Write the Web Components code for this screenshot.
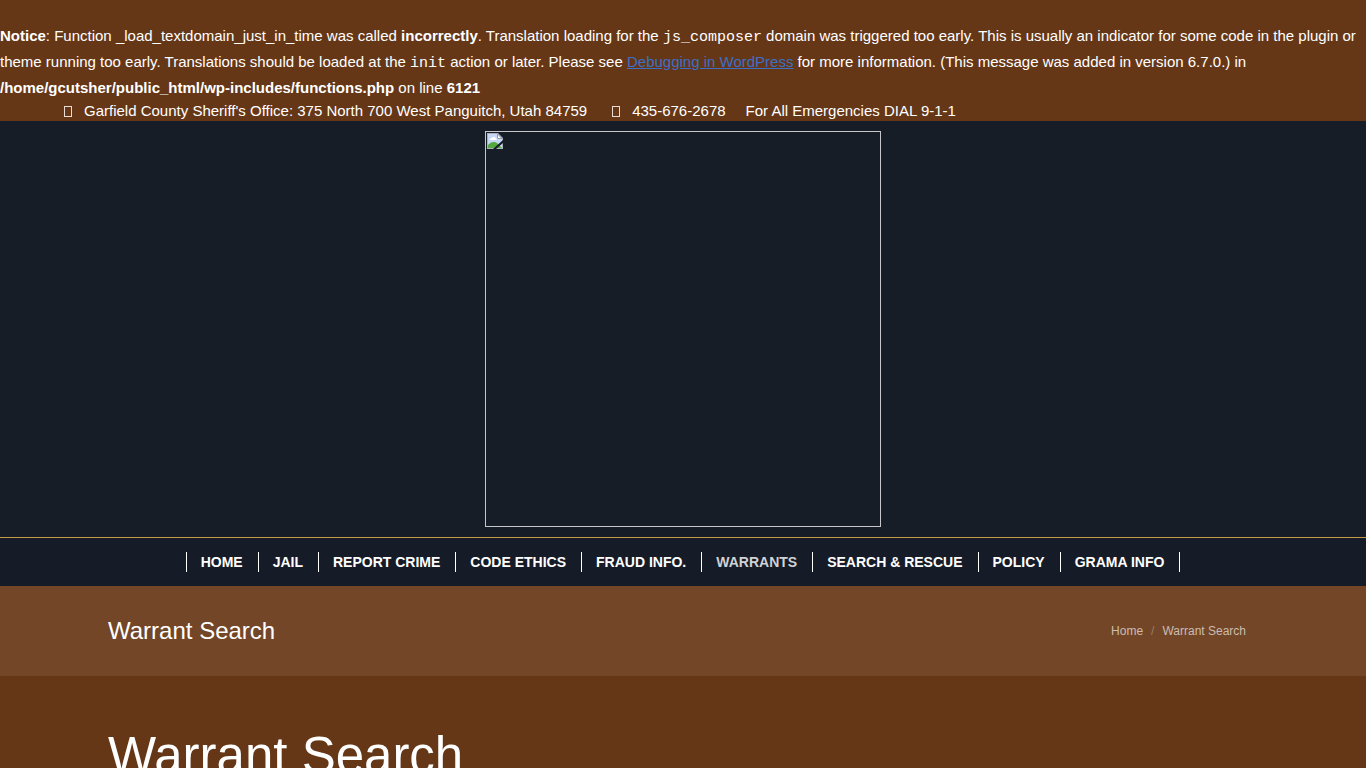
<!DOCTYPE html>
<html lang="en">
<head>
<meta charset="utf-8">
<meta name="viewport" content="width=device-width, initial-scale=1">
<title>Warrant Search</title>
<style>
  html { overflow-x: hidden; }
  body { margin: 0; background: #653717; color: #fff; font: 15px/26px "Liberation Sans", Arial, sans-serif; }
</style>
</head>
<body>
<sheriff-page></sheriff-page>

<template id="page-tpl">
  <style>
    :host { display: block; }
    b { font-weight: 700; }
    code { font: 15px "Liberation Mono", "Courier New", monospace; }
    a { color: #3b70c6; }
    h2 { margin: 0; padding: 50px 108px 0; font-size: 51px; line-height: 60px; font-weight: 400; }
  </style>
  <php-notice>
    <b>Notice</b>: Function _load_textdomain_just_in_time was called <b>incorrectly</b>. Translation loading for the <code>js_composer</code> domain was triggered too early. This is usually an indicator for some code in the plugin or theme running too early. Translations should be loaded at the <code>init</code> action or later. Please see <a href="#debugging">Debugging in WordPress</a> for more information. (This message was added in version 6.7.0.) in <b>/home/gcutsher/public_html/wp-includes/functions.php</b> on line <b>6121</b>
  </php-notice>
  <contact-bar>
    <contact-item icon>Garfield County Sheriff's Office: 375 North 700 West Panguitch, Utah 84759</contact-item>
    <contact-item icon>435-676-2678</contact-item>
    <contact-item>For All Emergencies DIAL 9-1-1</contact-item>
  </contact-bar>
  <site-logo></site-logo>
  <site-nav>
    <nav-item>HOME</nav-item>
    <nav-item>JAIL</nav-item>
    <nav-item>REPORT CRIME</nav-item>
    <nav-item>CODE ETHICS</nav-item>
    <nav-item>FRAUD INFO.</nav-item>
    <nav-item current>WARRANTS</nav-item>
    <nav-item>SEARCH &amp; RESCUE</nav-item>
    <nav-item>POLICY</nav-item>
    <nav-item>GRAMA INFO</nav-item>
  </site-nav>
  <title-bar>Warrant Search</title-bar>
  <main><h2>Warrant Search</h2></main>
</template>

<template id="notice-tpl">
  <style>:host { display: block; padding-top: 23px; }</style>
  <slot></slot>
</template>

<template id="contact-tpl">
  <style>
    :host { display: flex; flex-wrap: wrap; gap: 0 20px; padding: 0 59px; line-height: 20px; }
  </style>
  <slot></slot>
</template>

<template id="contact-item-tpl">
  <style>
    :host { display: flex; align-items: center; }
    i { display: none; box-sizing: border-box; width: 8px; height: 11px; margin: 0 12px 0 5px; border: 1px solid #e8ddd4; }
    :host([icon]) i { display: block; }
  </style>
  <i></i><span><slot></slot></span>
</template>

<template id="logo-tpl">
  <style>
    :host { display: flex; justify-content: center; padding: 10px; background: #161d27; }
    a { display: block; box-sizing: border-box; width: 396px; max-width: 100%; aspect-ratio: 1; padding: 1px; border: 1px solid #c5c7ca; }
    svg { display: block; }
  </style>
  <a href="#home" aria-label="Garfield County Sheriff's Office">
    <svg width="16" height="16" viewBox="0 0 16 16">
      <path d="M0 0H11L16 5V16H0Z" fill="#a9b0bb"/>
      <path d="M1 1H10.500V5.500H15V15H1Z" fill="#c6d8f6"/>
      <path d="M3 7C3 5.500 4 5 5 5C5.500 3.500 8 3.500 8.500 5C10 5 10 7 9 7Z" fill="#fff"/>
      <path d="M1 15V12C4 8.500 8 8 11 11L15 15Z" fill="#54a83f"/>
      <path d="M10.500 1L15 5.500H10.500Z" fill="#f5f6f8" stroke="#969daa"/>
      <path d="M16 7L6 16H9L16 10Z" fill="#161d27"/>
    </svg>
  </a>
</template>

<template id="nav-tpl">
  <style>
    :host { display: block; background: #151c27; border-top: 1px solid #c49a45; padding: 14px 0; }
    nav { display: flex; flex-wrap: wrap; justify-content: center; }
    nav::before { content: ""; width: 1px; background: #fff; }
  </style>
  <nav><slot></slot></nav>
</template>

<template id="nav-item-tpl">
  <style>
    :host { display: block; padding: 0 15px 0 14px; border-right: 1px solid #fff; font-size: 14px; line-height: 20px; font-weight: 700; }
    a { color: #fff; text-decoration: none; }
    :host([current]) a { color: #d0d2d4; }
  </style>
  <a href="#"><slot></slot></a>
</template>

<template id="title-tpl">
  <style>
    :host { display: flex; align-items: center; justify-content: space-between; min-height: 90px; padding: 0 120px 0 108px; background: #724627; }
    h1 { margin: 0; font-size: 24px; line-height: 30px; font-weight: 400; }
    ol { display: flex; gap: 8px; margin: 0; padding: 0; list-style: none; font-size: 12px; line-height: 20px; color: #cdbcb0; }
    a { color: inherit; text-decoration: none; }
    .sep { color: #9b7c67; }
  </style>
  <h1><slot></slot></h1>
  <nav aria-label="Breadcrumb"><ol><li><a href="#home">Home</a></li><li class="sep" aria-hidden="true">/</li><li>Warrant Search</li></ol></nav>
</template>

<script>
  const define = (name, id) => customElements.define(name, class extends HTMLElement {
    constructor() {
      super();
      this.attachShadow({ mode: "open" }).append(document.getElementById(id).content.cloneNode(true));
    }
  });
  define("php-notice", "notice-tpl");
  define("contact-bar", "contact-tpl");
  define("contact-item", "contact-item-tpl");
  define("site-logo", "logo-tpl");
  define("site-nav", "nav-tpl");
  define("nav-item", "nav-item-tpl");
  define("title-bar", "title-tpl");
  define("sheriff-page", "page-tpl");
</script>
</body>
</html>
